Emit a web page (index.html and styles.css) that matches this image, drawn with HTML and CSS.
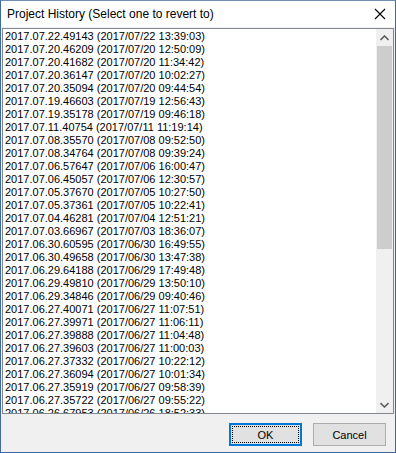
FILE: index.html
```html
<!DOCTYPE html>
<html lang="en">
<head>
    <meta charset="UTF-8">
    <link rel="stylesheet" href="styles.css">
    <title>Project History</title>
</head>
<body>
    <div class="window">
        <div class="titlebar">
            <span class="title">Project History (Select one to revert to)</span>
            <svg class="close" width="12" height="12" viewBox="0 0 12 12">
                <path d="M1 1 L11 11 M11 1 L1 11" stroke="#000" stroke-width="1.1" fill="none"/>
            </svg>
        </div>

        <div class="dialog">
            <div class="listbox">
                <ul class="items">
                    <li>2017.07.22.49143 (2017/07/22 13:39:03)</li>
                    <li>2017.07.20.46209 (2017/07/20 12:50:09)</li>
                    <li>2017.07.20.41682 (2017/07/20 11:34:42)</li>
                    <li>2017.07.20.36147 (2017/07/20 10:02:27)</li>
                    <li>2017.07.20.35094 (2017/07/20 09:44:54)</li>
                    <li>2017.07.19.46603 (2017/07/19 12:56:43)</li>
                    <li>2017.07.19.35178 (2017/07/19 09:46:18)</li>
                    <li>2017.07.11.40754 (2017/07/11 11:19:14)</li>
                    <li>2017.07.08.35570 (2017/07/08 09:52:50)</li>
                    <li>2017.07.08.34764 (2017/07/08 09:39:24)</li>
                    <li>2017.07.06.57647 (2017/07/06 16:00:47)</li>
                    <li>2017.07.06.45057 (2017/07/06 12:30:57)</li>
                    <li>2017.07.05.37670 (2017/07/05 10:27:50)</li>
                    <li>2017.07.05.37361 (2017/07/05 10:22:41)</li>
                    <li>2017.07.04.46281 (2017/07/04 12:51:21)</li>
                    <li>2017.07.03.66967 (2017/07/03 18:36:07)</li>
                    <li>2017.06.30.60595 (2017/06/30 16:49:55)</li>
                    <li>2017.06.30.49658 (2017/06/30 13:47:38)</li>
                    <li>2017.06.29.64188 (2017/06/29 17:49:48)</li>
                    <li>2017.06.29.49810 (2017/06/29 13:50:10)</li>
                    <li>2017.06.29.34846 (2017/06/29 09:40:46)</li>
                    <li>2017.06.27.40071 (2017/06/27 11:07:51)</li>
                    <li>2017.06.27.39971 (2017/06/27 11:06:11)</li>
                    <li>2017.06.27.39888 (2017/06/27 11:04:48)</li>
                    <li>2017.06.27.39603 (2017/06/27 11:00:03)</li>
                    <li>2017.06.27.37332 (2017/06/27 10:22:12)</li>
                    <li>2017.06.27.36094 (2017/06/27 10:01:34)</li>
                    <li>2017.06.27.35919 (2017/06/27 09:58:39)</li>
                    <li>2017.06.27.35722 (2017/06/27 09:55:22)</li>
                    <li>2017.06.26.67953 (2017/06/26 18:52:33)</li>
                </ul>
                <div class="scrollbar">
                    <div class="arrow">
                        <svg width="9" height="6" viewBox="0 0 9 6"><path d="M0.5 5 L4.5 1 L8.5 5" stroke="#606060" stroke-width="1.6" fill="none"/></svg>
                    </div>
                    <div class="track">
                        <div class="thumb"></div>
                    </div>
                    <div class="arrow">
                        <svg width="9" height="6" viewBox="0 0 9 6"><path d="M0.5 1 L4.5 5 L8.5 1" stroke="#606060" stroke-width="1.6" fill="none"/></svg>
                    </div>
                </div>
            </div>

            <div class="buttons">
                <button class="btn default"><span>OK</span></button>
                <button class="btn">Cancel</button>
            </div>
        </div>
    </div>
</body>
</html>
```

FILE: styles.css
```css
body {
    margin: 0;
    background: #ffffff;
    font-family: 'Liberation Sans', Arial, sans-serif;
}

.window {
    width: 396px;
    height: 453px;
    box-sizing: border-box;
    border: 1px solid #3d6b9c;
    border-top-color: #6f8fb2;
    display: flex;
    flex-direction: column;
    background: #f0f0f0;
}

.titlebar {
    height: 26px;
    background: #ffffff;
    display: flex;
    align-items: center;
    justify-content: space-between;
    padding: 0 9px 0 6px;
}

.title {
    font-size: 12px;
    color: #000;
}

.close {
    display: block;
}

.dialog {
    flex: 1;
    display: flex;
    flex-direction: column;
    padding: 1px 1px 0 1px;
}

.listbox {
    height: 386px;
    box-sizing: border-box;
    border: 1px solid #828790;
    background: #ffffff;
    display: flex;
}

.items {
    flex: 1;
    list-style: none;
    margin: 0;
    padding: 1px 0 0 2px;
    overflow: hidden;
    font-size: 11px;
    line-height: 13px;
    color: #000;
}

.items li {
    white-space: nowrap;
}

.scrollbar {
    width: 17px;
    display: flex;
    flex-direction: column;
    background: #f0f0f0;
}

.arrow {
    height: 17px;
    display: flex;
    align-items: center;
    justify-content: center;
}

.track {
    flex: 1;
    padding: 0 1px;
}

.thumb {
    height: 203px;
    background: #cdcdcd;
}

.buttons {
    display: flex;
    justify-content: flex-end;
    gap: 11px;
    padding: 9px 8px 0 0;
}

.btn {
    width: 73px;
    height: 23px;
    box-sizing: border-box;
    margin: 0;
    padding: 0;
    background: #e1e1e1;
    border: 1px solid #adadad;
    font-family: 'Liberation Sans', Arial, sans-serif;
    font-size: 11px;
    color: #000;
}

.btn.default {
    border: 2px solid #0078d7;
    padding: 1px;
}

.btn.default span {
    display: flex;
    align-items: center;
    justify-content: center;
    height: 100%;
    border: 1px dotted #000;
    box-sizing: border-box;
}
```
